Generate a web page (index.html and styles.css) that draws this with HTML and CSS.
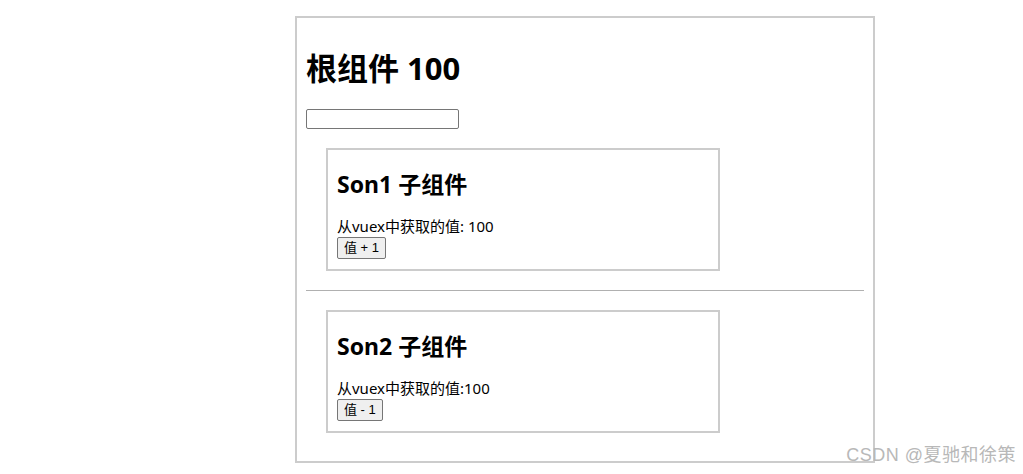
FILE: index.html
```html
<!DOCTYPE html>
<html lang="zh">
<head>
<meta charset="utf-8">
<title>Vuex demo</title>
<link rel="stylesheet" href="styles.css">
</head>
<body>
<div class="app">
  <h1 class="root-title">根组件 100</h1>
  <input class="field" type="text">
  <div class="son">
    <h2 class="son-title">Son1 子组件</h2>
    <div class="son-value">从vuex中获取的值: 100</div>
    <button class="btn">值 + 1</button>
  </div>
  <hr class="divider">
  <div class="son">
    <h2 class="son-title">Son2 子组件</h2>
    <div class="son-value">从vuex中获取的值:100</div>
    <button class="btn">值 - 1</button>
  </div>
</div>
<div class="watermark">CSDN @夏驰和徐策</div>
</body>
</html>
```

FILE: styles.css
```css
html, body {
  margin: 0;
  padding: 0;
  background: #ffffff;
  color: #000000;
  font-family: "Noto Sans", "Noto Sans CJK SC", sans-serif;
}

.app {
  width: 558px;
  margin: 16px 0 0 295px;
  padding: 9px;
  border: 2px solid #cccccc;
}

.root-title {
  font-size: 31px;
  font-weight: 700;
  line-height: 40px;
  margin: 21px 0 21px 0;
}

.field {
  display: block;
  box-sizing: border-box;
  width: 153px;
  height: 20px;
  margin: 0;
  padding: 1px 2px;
  border: 1px solid #767676;
  border-radius: 2px;
  background: #ffffff;
}

.son {
  width: 372px;
  margin: 19px 0 19px 20px;
  padding: 0 9px 10px 9px;
  border: 2px solid #cccccc;
}

.son-title {
  font-size: 23px;
  font-weight: 700;
  line-height: 28px;
  margin: 20px 0 20px 0;
}

.son-value {
  font-size: 15px;
  line-height: 19px;
  margin-top: -1px;
  padding-bottom: 1px;
}

.btn {
  display: block;
  box-sizing: border-box;
  height: 22px;
  margin: 0;
  padding: 0 6px;
  font-family: "Liberation Sans", "Noto Sans CJK SC", sans-serif;
  font-size: 13px;
  line-height: 18px;
  color: #000000;
  background: #efefef;
  border: 1px solid #767676;
  border-radius: 2px;
}

.divider {
  margin: 0;
  height: 0;
  border: 0;
  border-top: 1px solid #b0b0b0;
}

.watermark {
  position: absolute;
  right: 7px;
  top: 443px;
  font-size: 18px;
  letter-spacing: 0.5px;
  line-height: 24px;
  color: #b8b8b8;
  font-family: "Liberation Sans", "Noto Sans CJK SC", sans-serif;
}
```
